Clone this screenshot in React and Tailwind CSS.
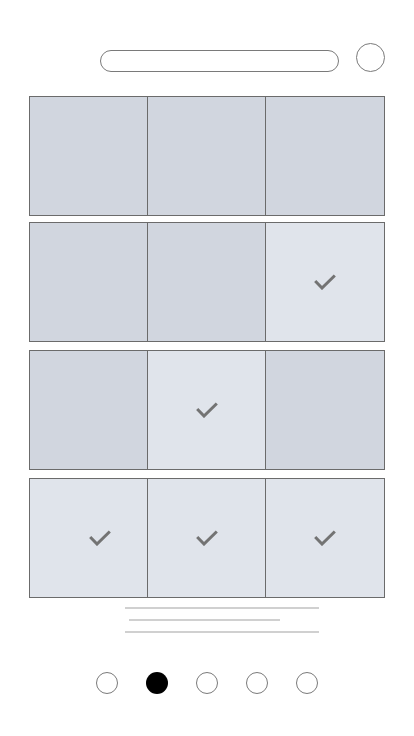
import React from "react";

const DARK = "bg-[#d1d6df]";
const LIGHT = "bg-[#e0e4eb]";

function Check() {
  return (
    <svg width="22" height="16" viewBox="0 0 22 16" fill="none">
      <polyline points="1.2,7 8,14 20.8,1.5" stroke="#737373" strokeWidth="3" strokeLinejoin="miter" />
    </svg>
  );
}

function Cell({ light, check, className = "", shift = false }) {
  return (
    <div className={`h-full flex items-center justify-center ${light ? LIGHT : DARK} ${className}`}>
      {check && (
        <div className={shift ? "pl-[22px] pb-[1px]" : "pb-[1px]"}>
          <Check />
        </div>
      )}
    </div>
  );
}

function Row({ cells, className = "" }) {
  return (
    <div className={`flex h-[120px] border border-[#6b6b6b] ${className}`}>
      <Cell {...cells[0]} className="w-[118px] border-r border-[#6b6b6b]" />
      <Cell {...cells[1]} className="w-[118px] border-r border-[#6b6b6b]" />
      <Cell {...cells[2]} className="flex-1" />
    </div>
  );
}

export default function App() {
  return (
    <div className="w-[414px] h-[736px] bg-white overflow-hidden" style={{ fontFamily: "'Liberation Sans', sans-serif" }}>
      <div className="flex items-end pt-[43px] pl-[100px]">
        <div className="w-[239px] h-[22px] rounded-full border border-[#7a7a7a]" />
        <div className="ml-[17px] w-[29px] h-[29px] rounded-full border border-[#7a7a7a]" />
      </div>
      <div className="ml-[29px] w-[356px] mt-[24px] flex flex-col">
        <Row cells={[{}, {}, {}]} />
        <Row className="mt-[6px]" cells={[{}, {}, { light: true, check: true }]} />
        <Row className="mt-[8px]" cells={[{}, { light: true, check: true }, {}]} />
        <Row
          className="mt-[8px]"
          cells={[
            { light: true, check: true, shift: true },
            { light: true, check: true },
            { light: true, check: true },
          ]}
        />
      </div>
      <div className="flex flex-col mt-[9px]">
        <div className="ml-[125px] w-[194px] h-[2px] bg-[#d0d0d0]" />
        <div className="ml-[129px] w-[151px] h-[2px] bg-[#d0d0d0] mt-[10px]" />
        <div className="ml-[125px] w-[194px] h-[2px] bg-[#d0d0d0] mt-[10px]" />
      </div>
      <div className="flex gap-[28px] pl-[96px] mt-[39px]">
        <div className="w-[22px] h-[22px] rounded-full border border-[#7a7a7a]" />
        <div className="w-[22px] h-[22px] rounded-full bg-black" />
        <div className="w-[22px] h-[22px] rounded-full border border-[#7a7a7a]" />
        <div className="w-[22px] h-[22px] rounded-full border border-[#7a7a7a]" />
        <div className="w-[22px] h-[22px] rounded-full border border-[#7a7a7a]" />
      </div>
    </div>
  );
}
